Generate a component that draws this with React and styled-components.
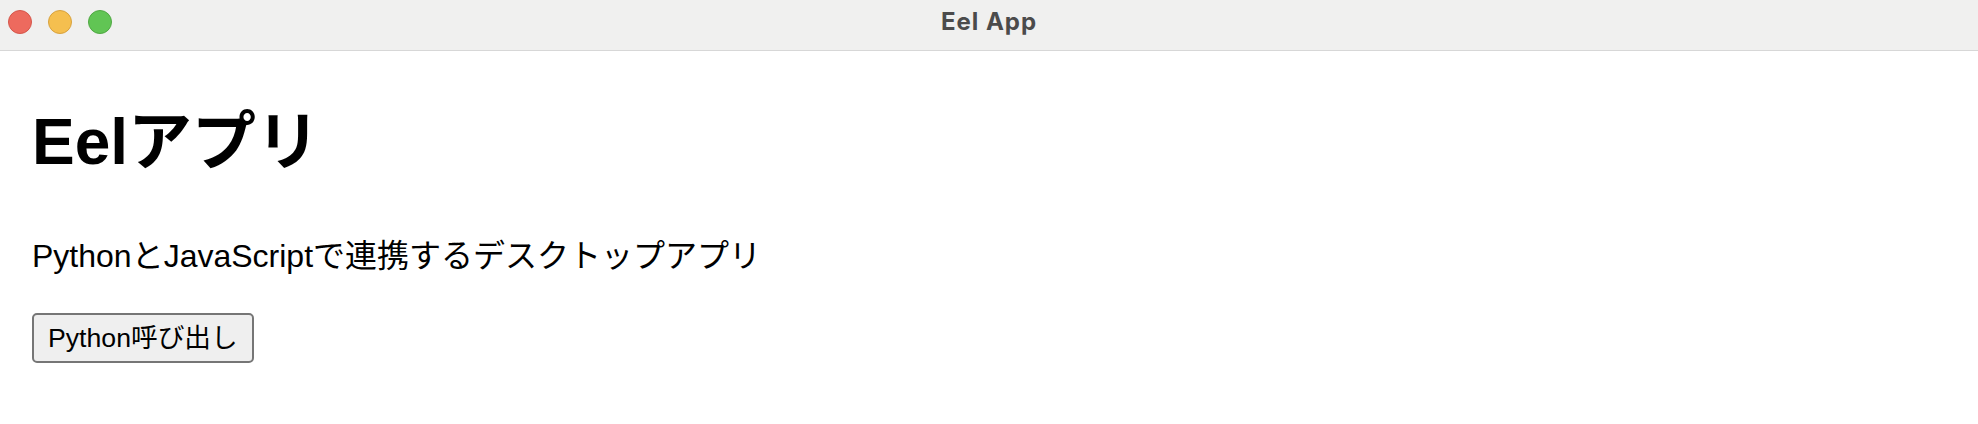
import React from "react";
import styled, { createGlobalStyle } from "styled-components";

const Global = createGlobalStyle`
  html, body { margin: 0; padding: 0; background: #ffffff; }
  body { font-family: "Liberation Sans", "Noto Sans CJK JP", sans-serif; color: #000; }
`;

const Window = styled.div`
  width: 1978px;
  height: 424px;
  background: #ffffff;
  display: flex;
  flex-direction: column;
  overflow: hidden;
`;

const TitleBar = styled.header`
  height: 50px;
  flex: 0 0 auto;
  background: #f0f0ef;
  border-bottom: 1px solid #d7d7d7;
  display: grid;
  grid-template-columns: 1fr auto 1fr;
  align-items: center;
`;

const Lights = styled.div`
  display: flex;
  gap: 16px;
  padding-left: 8px;
  padding-bottom: 6px;
`;

const Light = styled.span`
  width: 24px;
  height: 24px;
  border-radius: 50%;
  box-sizing: border-box;
  background: ${(p) => p.$fill};
  border: 1px solid ${(p) => p.$edge};
`;

const Title = styled.div`
  font-family: Inter, "Liberation Sans", sans-serif;
  font-weight: 700;
  font-size: 24px;
  color: #4b4b4b;
  padding-bottom: 8px;
  letter-spacing: 1px;
`;

const Content = styled.main`
  padding: 0 32px;
  display: flex;
  flex-direction: column;
  align-items: flex-start;
`;

const Heading = styled.h1`
  margin: 54px 0 0;
  font-size: 64px;
  line-height: 74px;
  font-weight: 700;
`;

const Lead = styled.p`
  margin: 59px 0 0;
  font-size: 32px;
  line-height: 37px;
`;

const Button = styled.button`
  margin-top: 38px;
  box-sizing: border-box;
  height: 50px;
  padding: 2px 14px;
  font-family: "Liberation Sans", "Noto Sans CJK JP", sans-serif;
  font-size: 26.67px;
  line-height: 42px;
  color: #000;
  background: #efefef;
  border: 2px solid #767676;
  border-radius: 5px;
  cursor: pointer;
`;

export default function App() {
  const callPython = () => {};
  return (
    <>
      <Global />
      <Window>
        <TitleBar>
          <Lights>
            <Light $fill="#ed6a5e" $edge="#d5564b" />
            <Light $fill="#f5bf4f" $edge="#d8a23e" />
            <Light $fill="#61c554" $edge="#50a843" />
          </Lights>
          <Title>Eel App</Title>
          <div />
        </TitleBar>
        <Content>
          <Heading>Eelアプリ</Heading>
          <Lead>PythonとJavaScriptで連携するデスクトップアプリ</Lead>
          <Button type="button" onClick={callPython}>Python呼び出し</Button>
        </Content>
      </Window>
    </>
  );
}
